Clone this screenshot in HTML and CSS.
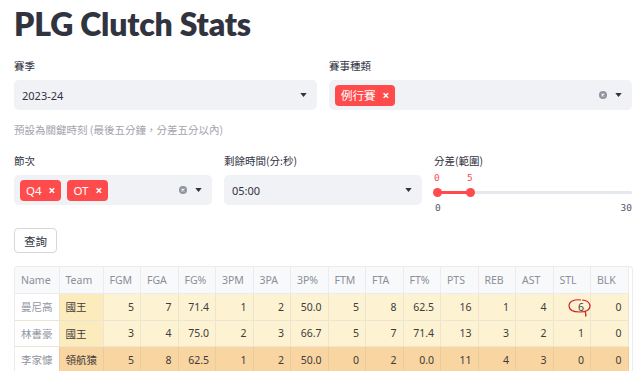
FILE: index.html
```html
<!DOCTYPE html>
<html lang="zh-Hant">
<head>
  <meta charset="UTF-8" />
  <meta name="viewport" content="width=device-width, initial-scale=1.0" />
  <title>PLG Clutch Stats</title>
  <link rel="stylesheet" href="styles.css">
</head>
<body>
  <main class="app">
    <h1 class="title">PLG Clutch Stats</h1>

    <!-- Season / game type -->
    <div class="row cols-2">
      <div class="field">
        <label class="field-label">賽季</label>
        <div class="select">
          <span class="select-value">2023-24</span>
          <svg class="caret" viewBox="0 0 8 5"><path d="M0 0h8L4 5z" /></svg>
        </div>
      </div>
      <div class="field">
        <label class="field-label">賽事種類</label>
        <div class="select multi">
          <span class="tag">例行賽<span class="tag-x">×</span></span>
          <span class="spacer"></span>
          <svg class="clear" viewBox="0 0 10 10"><circle cx="5" cy="5" r="5" /><path d="M3.2 3.2l3.6 3.6M6.8 3.2l-3.6 3.6" /></svg>
          <svg class="caret" viewBox="0 0 8 5"><path d="M0 0h8L4 5z" /></svg>
        </div>
      </div>
    </div>

    <p class="caption">預設為關鍵時刻 (最後五分鐘，分差五分以內)</p>

    <!-- Period / time left / score diff -->
    <div class="row cols-3">
      <div class="field">
        <label class="field-label">節次</label>
        <div class="select multi">
          <span class="tag">Q4<span class="tag-x">×</span></span>
          <span class="tag">OT<span class="tag-x">×</span></span>
          <span class="spacer"></span>
          <svg class="clear" viewBox="0 0 10 10"><circle cx="5" cy="5" r="5" /><path d="M3.2 3.2l3.6 3.6M6.8 3.2l-3.6 3.6" /></svg>
          <svg class="caret" viewBox="0 0 8 5"><path d="M0 0h8L4 5z" /></svg>
        </div>
      </div>
      <div class="field">
        <label class="field-label">剩餘時間(分:秒)</label>
        <div class="select">
          <span class="select-value">05:00</span>
          <svg class="caret" viewBox="0 0 8 5"><path d="M0 0h8L4 5z" /></svg>
        </div>
      </div>
      <div class="field">
        <label class="field-label">分差(範圍)</label>
        <div class="slider">
          <div class="slider-values">
            <span class="slider-value">0</span>
            <span class="slider-value" style="left: 16.67%">5</span>
          </div>
          <div class="track">
            <div class="track-fill" style="width: 16.67%"></div>
            <span class="thumb"></span>
            <span class="thumb" style="left: 16.67%"></span>
          </div>
          <div class="slider-ticks">
            <span>0</span>
            <span>30</span>
          </div>
        </div>
      </div>
    </div>

    <button class="btn">查詢</button>

    <!-- Results -->
    <div class="table-wrap">
      <table class="stats">
        <colgroup>
          <col class="w-wide"><col class="w-wide">
          <col><col><col><col><col><col><col><col><col><col><col><col><col><col>
        </colgroup>
        <thead>
          <tr>
            <th class="c-name">Name</th><th class="c-team">Team</th>
            <th>FGM</th><th>FGA</th><th>FG%</th><th>3PM</th><th>3PA</th><th>3P%</th>
            <th>FTM</th><th>FTA</th><th>FT%</th><th>PTS</th><th>REB</th><th>AST</th><th>STL</th><th>BLK</th>
          </tr>
        </thead>
        <tbody>
          <tr class="kings">
            <td class="c-name">曼尼高</td><td class="c-team">國王</td>
            <td>5</td><td>7</td><td>71.4</td><td>1</td><td>2</td><td>50.0</td>
            <td>5</td><td>8</td><td>62.5</td><td>16</td><td>1</td><td>4</td><td>6</td><td>0</td>
          </tr>
          <tr class="kings">
            <td class="c-name">林書豪</td><td class="c-team">國王</td>
            <td>3</td><td>4</td><td>75.0</td><td>2</td><td>3</td><td>66.7</td>
            <td>5</td><td>7</td><td>71.4</td><td>13</td><td>3</td><td>2</td><td>1</td><td>0</td>
          </tr>
          <tr class="pilots">
            <td class="c-name">李家慷</td><td class="c-team">領航猿</td>
            <td>5</td><td>8</td><td>62.5</td><td>1</td><td>2</td><td>50.0</td>
            <td>0</td><td>2</td><td>0.0</td><td>11</td><td>4</td><td>3</td><td>0</td><td>0</td>
          </tr>
        </tbody>
      </table>
      <svg class="mark" viewBox="0 0 26 22"><path d="M14 2C8 1 2 3 2 8c0 5 5 6 11 6 6 0 10-2 10-6 0-3-3-6-8-6M18 13.5c1 2 1.5 3.5 0.5 5" /></svg>
    </div>
  </main>
</body>
</html>
```

FILE: styles.css
```css
body {
  margin: 0;
  font-family: "Noto Sans", "Noto Sans CJK TC", sans-serif;
  color: #31333f;
  background: #fff;
}

.app {
  padding: 0 8px 0 14px;
}

.title {
  margin: 0;
  padding-top: 4px;
  font-family: "Lato", "Noto Sans CJK TC", sans-serif;
  font-size: 32px;
  font-weight: 800;
  line-height: 40px;
  height: 55px;
  letter-spacing: -0.2px;
}

.row {
  display: grid;
  gap: 12px;
}

.cols-2 {
  grid-template-columns: 1fr 1fr;
}

.cols-3 {
  grid-template-columns: 1fr 1fr 1fr;
  margin-top: 17px;
}

.field-label {
  display: block;
  font-size: 10.5px;
  line-height: 14px;
  margin-bottom: 7px;
  font-family: "Noto Sans CJK TC", sans-serif;
}

.select {
  height: 30px;
  background: #f0f2f6;
  border-radius: 5px;
  display: flex;
  align-items: center;
  padding: 0 10px 0 8px;
  font-size: 11px;
}

.select-value {
  flex: 1;
}

.select.multi {
  padding-left: 6px;
  gap: 6px;
}

.spacer {
  flex: 1;
}

.caret {
  width: 7px;
  height: 4px;
  fill: #31333f;
}

.clear {
  width: 8px;
  height: 8px;
  margin-right: 2px;
}

.clear circle {
  fill: #8f939d;
}

.clear path {
  stroke: #f0f2f6;
  stroke-width: 1.4;
}

.tag {
  display: flex;
  align-items: center;
  height: 21px;
  padding: 0 6px;
  background: #ff4b4b;
  color: #fff;
  border-radius: 4px;
  font-size: 11.5px;
  font-family: "Noto Sans", "Noto Sans CJK TC", sans-serif;
}

.tag-x {
  margin-left: 7px;
  font-size: 12px;
  font-weight: 700;
}

.caption {
  margin: 13px 0 0;
  font-size: 10.5px;
  line-height: 14px;
  color: #a3a5ad;
  font-family: "Noto Sans CJK TC", sans-serif;
}

/* slider */
.slider {
  height: 30px;
  font-family: "DejaVu Sans Mono", monospace;
  font-size: 9.5px;
}

.slider-values {
  position: relative;
  height: 13px;
  color: #ff4b4b;
}

.slider-value {
  position: absolute;
  left: 0;
  top: -3px;
}

.track {
  position: relative;
  height: 3px;
  margin-top: 3px;
  background: #e6e8ee;
  border-radius: 2px;
}

.track-fill {
  height: 3px;
  background: #ff4b4b;
}

.thumb {
  position: absolute;
  left: 0;
  top: -3px;
  width: 9px;
  height: 9px;
  margin-left: -1px;
  border-radius: 50%;
  background: #ff4b4b;
}

.slider-ticks {
  display: flex;
  justify-content: space-between;
  margin-top: 8px;
  padding-left: 1px;
  color: #555862;
}

.btn {
  display: block;
  margin-top: 23px;
  height: 25px;
  padding: 0 9px;
  background: #fff;
  border: 1px solid #d6d7dc;
  border-radius: 4px;
  font-size: 11.5px;
  color: #31333f;
  font-family: "Noto Sans CJK TC", sans-serif;
}

/* table */
.table-wrap {
  position: relative;
  margin-top: 13px;
  width: 617px;
  border: 1px solid #ececef;
  border-bottom: none;
  border-radius: 4px 4px 0 0;
  overflow: hidden;
}

.stats {
  border-collapse: collapse;
  table-layout: fixed;
  width: 613px;
  font-size: 10.5px;
}

.stats col {
  width: 37.5px;
}

.stats col.w-wide {
  width: 44px;
}

.stats th,
.stats td {
  box-sizing: border-box;
  border: 1px solid #e9e8e6;
  padding: 0 6px;
  height: 26.5px;
  white-space: nowrap;
  overflow: hidden;
}

.stats tr > :first-child {
  border-left: none;
}

.stats thead th {
  border-top: none;
  background: #f8f9fb;
  color: #8c8e98;
  font-weight: 400;
  text-align: left;
  border-color: #ececef;
}

.stats td {
  text-align: right;
  color: #3c3c3c;
}

.stats .c-name,
.stats .c-team {
  text-align: left;
  font-family: "Noto Sans CJK TC", sans-serif;
}

.stats thead .c-name,
.stats thead .c-team {
  font-family: "Noto Sans", sans-serif;
}

.stats td.c-name {
  color: #92949c;
  background: #fff;
}

.kings td {
  background: #fdf3d3;
  border-color: #ece5cf;
}

.kings td.c-team {
  background: #fcebbc;
}

.pilots td {
  background: #f9d5a1;
  border-color: #e9cb9c;
}

.mark {
  position: absolute;
  left: 552px;
  top: 31px;
  width: 26px;
  height: 22px;
  fill: none;
  stroke: #d41f1f;
  stroke-width: 1.2;
}
```
